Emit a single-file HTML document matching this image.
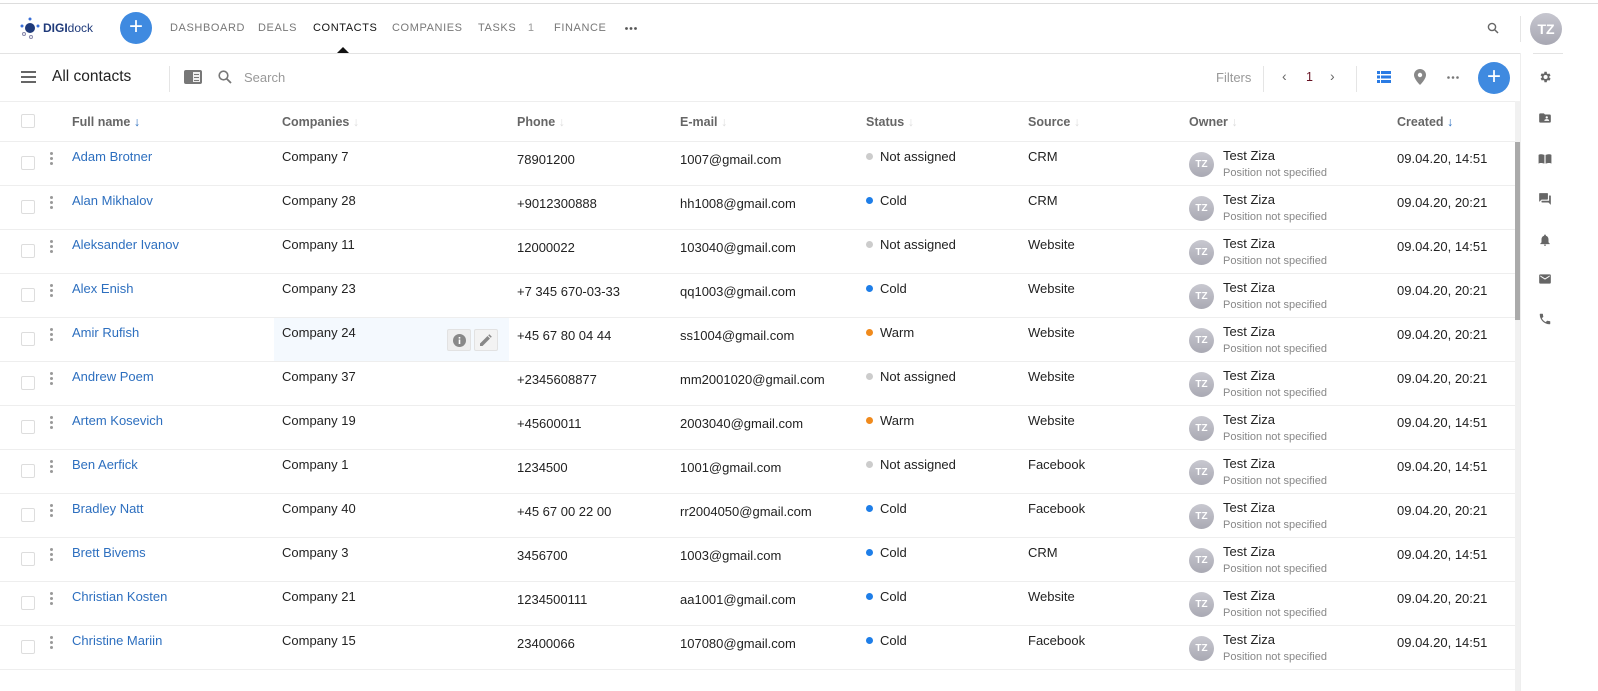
<!DOCTYPE html>
<html><head><meta charset="utf-8"><style>
*{margin:0;padding:0;box-sizing:border-box}
body{width:1598px;height:691px;overflow:hidden;background:#fff;font-family:"Liberation Sans",Arial,sans-serif;position:relative;color:#222}
.a{position:absolute;white-space:nowrap}
.nav{font-size:11px;letter-spacing:.6px;color:#777;top:22px}
.hd{font-size:12.5px;font-weight:bold;color:#666;top:115px}
.row{position:absolute;left:0;width:1515px;height:44px;border-bottom:1px solid #eee;font-size:13px}
.row .a{line-height:16px}
.cb{left:21px;top:14px;width:14px;height:14px;border:1.5px solid #ddd;border-radius:2px}
.dots{left:50px;top:10px;width:3px}
.dots i{display:block;width:3px;height:3px;border-radius:50%;background:#999;margin-bottom:2px}
.nm{left:72px;top:7px;color:#2d6fbf}
.co{left:282px;top:7px}
.ph{left:517px;top:10px}
.em{left:680px;top:10px}
.st{left:866px;top:7px}
.st b{display:inline-block;width:7px;height:7px;border-radius:50%;margin-right:7px;vertical-align:1px}
.so{left:1028px;top:7px}
.av{left:1189px;top:10px;width:25px;height:25px;border-radius:50%;background:linear-gradient(#c8c8d0,#a9a9b3);color:#fff;font-size:10px;font-weight:bold;text-align:center;line-height:25px!important}
.on{left:1223px;top:6px}
.ps{left:1223px;top:23px;font-size:11px;color:#888}
.cr{left:1397px;top:9px}
.g{background:#ccc}.bl{background:#1e7ee8}.or{background:#f08a1c}
.si{position:absolute;left:1538px;width:14px;height:14px}
</style></head><body>
<div class="a" style="left:0;top:3px;width:1598px;height:1px;background:#ddd"></div>
<svg class="a" style="left:19px;top:17px" width="22" height="22" viewBox="0 0 22 22"><circle cx="11" cy="11" r="5" fill="#1f3a7a"/><circle cx="11" cy="2" r="1.5" fill="#3a6fd8"/><circle cx="3" cy="9" r="1.5" fill="#3a6fd8"/><circle cx="19" cy="9" r="1.5" fill="#3a6fd8"/><circle cx="5" cy="17" r="1.5" fill="none" stroke="#88a" /><circle cx="12" cy="20" r="1.5" fill="none" stroke="#88a"/></svg>
<div class="a" style="left:43px;top:21px;font-size:12px;color:#1f3a7a"><b>DIGI</b>dock</div>
<div class="a" style="left:120px;top:12px;width:32px;height:32px;border-radius:50%;background:#3f8ae0;color:#fff;font-size:24px;line-height:30px;text-align:center">+</div>
<div class="a nav" style="left:170px">DASHBOARD</div>
<div class="a nav" style="left:258px">DEALS</div>
<div class="a nav" style="left:313px;color:#111">CONTACTS</div>
<div class="a nav" style="left:392px">COMPANIES</div>
<div class="a nav" style="left:478px">TASKS <span style="margin-left:8px;color:#999">1</span></div>
<div class="a nav" style="left:554px">FINANCE</div>
<svg class="a" style="left:625px;top:27px" width="12" height="3"><circle cx="1.5" cy="1.5" r="1.4" fill="#555"/><circle cx="6" cy="1.5" r="1.4" fill="#555"/><circle cx="10.5" cy="1.5" r="1.4" fill="#555"/></svg>
<div class="a" style="left:337px;top:47px;width:0;height:0;border-left:6px solid transparent;border-right:6px solid transparent;border-bottom:6px solid #111"></div>
<svg class="a" style="left:1487px;top:22px" width="12" height="12" viewBox="0 0 12 12"><circle cx="5" cy="5" r="3.6" fill="none" stroke="#666" stroke-width="1.4"/><path d="M7.6 7.6L11 11" stroke="#666" stroke-width="1.5"/></svg>
<div class="a" style="left:1520px;top:16px;width:1px;height:26px;background:#e5e5e5"></div>
<div class="a" style="left:1530px;top:13px;width:32px;height:32px;border-radius:50%;background:linear-gradient(#c6c6cf,#a8a8b3);color:#fff;font-weight:bold;font-size:14px;text-align:center;line-height:32px">TZ</div>
<div class="a" style="left:0;top:53px;width:1520px;height:1px;background:#e3e3e3"></div>
<div class="a" style="left:1533px;top:53px;width:30px;height:1px;background:#e3e3e3"></div>
<div class="a" style="left:1520px;top:53px;width:1px;height:638px;background:#eee"></div>
<svg class="a" style="left:21px;top:71px" width="15" height="12"><rect y="0" width="15" height="2" fill="#666"/><rect y="5" width="15" height="2" fill="#666"/><rect y="10" width="15" height="2" fill="#666"/></svg>
<div class="a" style="left:52px;top:68px;font-size:15.5px;color:#222">All contacts</div>
<div class="a" style="left:169px;top:66px;width:1px;height:26px;background:#e5e5e5"></div>
<svg class="a" style="left:184px;top:70px" width="18" height="14"><rect width="18" height="14" rx="2" fill="#777"/><rect x="9" y="2" width="7" height="10" fill="#eee"/><rect x="10" y="4" width="5" height="1" fill="#777"/><rect x="10" y="7" width="5" height="1" fill="#777"/><rect x="10" y="10" width="5" height="1" fill="#777"/></svg>
<svg class="a" style="left:218px;top:70px" width="14" height="14" viewBox="0 0 14 14"><circle cx="5.5" cy="5.5" r="4.3" fill="none" stroke="#777" stroke-width="1.6"/><path d="M8.7 8.7L13 13" stroke="#777" stroke-width="1.8"/></svg>
<div class="a" style="left:244px;top:70px;font-size:13px;color:#999">Search</div>
<div class="a" style="left:1216px;top:70px;font-size:13px;color:#999">Filters</div>
<div class="a" style="left:1263px;top:66px;width:1px;height:26px;background:#e5e5e5"></div>
<div class="a" style="left:1282px;top:68px;font-size:14px;color:#666">‹</div>
<div class="a" style="left:1306px;top:70px;font-size:12.5px;color:#612">1</div>
<div class="a" style="left:1330px;top:68px;font-size:14px;color:#666">›</div>
<div class="a" style="left:1356px;top:66px;width:1px;height:26px;background:#e5e5e5"></div>
<svg class="a" style="left:1377px;top:71px" width="14" height="12"><rect width="3" height="3" fill="#2a7be4"/><rect x="4" width="10" height="3" fill="#2a7be4"/><rect y="4.5" width="3" height="3" fill="#2a7be4"/><rect x="4" y="4.5" width="10" height="3" fill="#2a7be4"/><rect y="9" width="3" height="3" fill="#2a7be4"/><rect x="4" y="9" width="10" height="3" fill="#2a7be4"/></svg>
<svg class="a" style="left:1414px;top:69px" width="12" height="16" viewBox="0 0 12 16"><path d="M6 0C2.7 0 0 2.6 0 5.9 0 10.3 6 16 6 16s6-5.7 6-10.1C12 2.6 9.3 0 6 0z" fill="#888"/><circle cx="6" cy="6" r="2.2" fill="#fff"/></svg>
<svg class="a" style="left:1447px;top:76px" width="12" height="3"><circle cx="1.5" cy="1.5" r="1.3" fill="#777"/><circle cx="6" cy="1.5" r="1.3" fill="#777"/><circle cx="10.5" cy="1.5" r="1.3" fill="#777"/></svg>
<div class="a" style="left:1478px;top:62px;width:32px;height:32px;border-radius:50%;background:#3f8ae0;color:#fff;font-size:24px;line-height:30px;text-align:center">+</div>
<div class="a" style="left:0;top:101px;width:1515px;height:1px;background:#eee"></div>
<div class="a" style="left:21px;top:114px;width:14px;height:14px;border:1.5px solid #ddd;border-radius:2px"></div>
<div class="a hd" style="left:72px">Full name <span style="color:#2d6fbf;font-weight:normal">↓</span></div>
<div class="a hd" style="left:282px">Companies <span style="color:#ddd;font-weight:normal">↓</span></div>
<div class="a hd" style="left:517px">Phone <span style="color:#ddd;font-weight:normal">↓</span></div>
<div class="a hd" style="left:680px">E-mail <span style="color:#ddd;font-weight:normal">↓</span></div>
<div class="a hd" style="left:866px">Status <span style="color:#ddd;font-weight:normal">↓</span></div>
<div class="a hd" style="left:1028px">Source <span style="color:#ddd;font-weight:normal">↓</span></div>
<div class="a hd" style="left:1189px">Owner <span style="color:#ddd;font-weight:normal">↓</span></div>
<div class="a hd" style="left:1397px">Created <span style="color:#2d6fbf;font-weight:normal">↓</span></div>
<div class="a" style="left:0;top:141px;width:1515px;height:1px;background:#eee"></div>
<div class="a" style="left:1515px;top:101px;width:5px;height:590px;background:#f1f1f1"></div>
<div class="a" style="left:1515px;top:142px;width:5px;height:178px;background:#aaa"></div>
<div class="row" style="top:142px"><div class="a cb"></div><div class="a dots"><i></i><i></i><i></i></div><div class="a nm">Adam Brotner</div><div class="a co">Company 7</div><div class="a ph">78901200</div><div class="a em">1007@gmail.com</div><div class="a st"><b class="g"></b>Not assigned</div><div class="a so">CRM</div><div class="a av">TZ</div><div class="a on">Test Ziza</div><div class="a ps">Position not specified</div><div class="a cr">09.04.20, 14:51</div></div>
<div class="row" style="top:186px"><div class="a cb"></div><div class="a dots"><i></i><i></i><i></i></div><div class="a nm">Alan Mikhalov</div><div class="a co">Company 28</div><div class="a ph">+9012300888</div><div class="a em">hh1008@gmail.com</div><div class="a st"><b class="bl"></b>Cold</div><div class="a so">CRM</div><div class="a av">TZ</div><div class="a on">Test Ziza</div><div class="a ps">Position not specified</div><div class="a cr">09.04.20, 20:21</div></div>
<div class="row" style="top:230px"><div class="a cb"></div><div class="a dots"><i></i><i></i><i></i></div><div class="a nm">Aleksander Ivanov</div><div class="a co">Company 11</div><div class="a ph">12000022</div><div class="a em">103040@gmail.com</div><div class="a st"><b class="g"></b>Not assigned</div><div class="a so">Website</div><div class="a av">TZ</div><div class="a on">Test Ziza</div><div class="a ps">Position not specified</div><div class="a cr">09.04.20, 14:51</div></div>
<div class="row" style="top:274px"><div class="a cb"></div><div class="a dots"><i></i><i></i><i></i></div><div class="a nm">Alex Enish</div><div class="a co">Company 23</div><div class="a ph">+7 345 670-03-33</div><div class="a em">qq1003@gmail.com</div><div class="a st"><b class="bl"></b>Cold</div><div class="a so">Website</div><div class="a av">TZ</div><div class="a on">Test Ziza</div><div class="a ps">Position not specified</div><div class="a cr">09.04.20, 20:21</div></div>
<div class="row" style="top:318px"><div class="a" style="left:274px;top:0;width:235px;height:43px;background:#f4f9fe"></div><div class="a" style="left:447px;top:11px;width:24px;height:22px;background:#eee;border:1px solid #e2e2e2;border-radius:2px"><svg style="margin:4px 5px" width="13" height="13" viewBox="0 0 13 13"><circle cx="6.5" cy="6.5" r="6.5" fill="#888"/><rect x="5.7" y="5.5" width="1.6" height="4.5" fill="#fff"/><rect x="5.7" y="3" width="1.6" height="1.6" fill="#fff"/></svg></div><div class="a" style="left:474px;top:11px;width:24px;height:22px;background:#f3f3f3;border:1px solid #e2e2e2;border-radius:2px"><svg style="margin:4px 5px" width="12" height="12" viewBox="0 0 12 12"><path d="M0 9.5V12h2.5L10 4.5 7.5 2z M11.8 2.7L9.3.2 8.2 1.3l2.5 2.5z" fill="#888"/></svg></div><div class="a cb"></div><div class="a dots"><i></i><i></i><i></i></div><div class="a nm">Amir Rufish</div><div class="a co">Company 24</div><div class="a ph">+45 67 80 04 44</div><div class="a em">ss1004@gmail.com</div><div class="a st"><b class="or"></b>Warm</div><div class="a so">Website</div><div class="a av">TZ</div><div class="a on">Test Ziza</div><div class="a ps">Position not specified</div><div class="a cr">09.04.20, 20:21</div></div>
<div class="row" style="top:362px"><div class="a cb"></div><div class="a dots"><i></i><i></i><i></i></div><div class="a nm">Andrew Poem</div><div class="a co">Company 37</div><div class="a ph">+2345608877</div><div class="a em">mm2001020@gmail.com</div><div class="a st"><b class="g"></b>Not assigned</div><div class="a so">Website</div><div class="a av">TZ</div><div class="a on">Test Ziza</div><div class="a ps">Position not specified</div><div class="a cr">09.04.20, 20:21</div></div>
<div class="row" style="top:406px"><div class="a cb"></div><div class="a dots"><i></i><i></i><i></i></div><div class="a nm">Artem Kosevich</div><div class="a co">Company 19</div><div class="a ph">+45600011</div><div class="a em">2003040@gmail.com</div><div class="a st"><b class="or"></b>Warm</div><div class="a so">Website</div><div class="a av">TZ</div><div class="a on">Test Ziza</div><div class="a ps">Position not specified</div><div class="a cr">09.04.20, 14:51</div></div>
<div class="row" style="top:450px"><div class="a cb"></div><div class="a dots"><i></i><i></i><i></i></div><div class="a nm">Ben Aerfick</div><div class="a co">Company 1</div><div class="a ph">1234500</div><div class="a em">1001@gmail.com</div><div class="a st"><b class="g"></b>Not assigned</div><div class="a so">Facebook</div><div class="a av">TZ</div><div class="a on">Test Ziza</div><div class="a ps">Position not specified</div><div class="a cr">09.04.20, 14:51</div></div>
<div class="row" style="top:494px"><div class="a cb"></div><div class="a dots"><i></i><i></i><i></i></div><div class="a nm">Bradley Natt</div><div class="a co">Company 40</div><div class="a ph">+45 67 00 22 00</div><div class="a em">rr2004050@gmail.com</div><div class="a st"><b class="bl"></b>Cold</div><div class="a so">Facebook</div><div class="a av">TZ</div><div class="a on">Test Ziza</div><div class="a ps">Position not specified</div><div class="a cr">09.04.20, 20:21</div></div>
<div class="row" style="top:538px"><div class="a cb"></div><div class="a dots"><i></i><i></i><i></i></div><div class="a nm">Brett Bivems</div><div class="a co">Company 3</div><div class="a ph">3456700</div><div class="a em">1003@gmail.com</div><div class="a st"><b class="bl"></b>Cold</div><div class="a so">CRM</div><div class="a av">TZ</div><div class="a on">Test Ziza</div><div class="a ps">Position not specified</div><div class="a cr">09.04.20, 14:51</div></div>
<div class="row" style="top:582px"><div class="a cb"></div><div class="a dots"><i></i><i></i><i></i></div><div class="a nm">Christian Kosten</div><div class="a co">Company 21</div><div class="a ph">1234500111</div><div class="a em">aa1001@gmail.com</div><div class="a st"><b class="bl"></b>Cold</div><div class="a so">Website</div><div class="a av">TZ</div><div class="a on">Test Ziza</div><div class="a ps">Position not specified</div><div class="a cr">09.04.20, 20:21</div></div>
<div class="row" style="top:626px"><div class="a cb"></div><div class="a dots"><i></i><i></i><i></i></div><div class="a nm">Christine Mariin</div><div class="a co">Company 15</div><div class="a ph">23400066</div><div class="a em">107080@gmail.com</div><div class="a st"><b class="bl"></b>Cold</div><div class="a so">Facebook</div><div class="a av">TZ</div><div class="a on">Test Ziza</div><div class="a ps">Position not specified</div><div class="a cr">09.04.20, 14:51</div></div>
<svg class="si" style="top:70px" viewBox="0 0 24 24"><path fill="#666" d="M19.4 13a7.5 7.5 0 000-2l2.1-1.6-2-3.5-2.5 1a7 7 0 00-1.700-1L15 3h-4l-.4 2.7a7 7 0 00-1.7 1l-2.5-1-2 3.5L6.6 11a7.5 7.5 0 000 2l-2.1 1.6 2 3.5 2.5-1a7 7 0 001.7 1L11 21h4l.4-2.7a7 7 0 001.7-1l2.5 1 2-3.5zM13 15.5a3.5 3.5 0 110-7 3.5 3.5 0 010 7z"/></svg>
<svg class="si" style="top:111px" viewBox="0 0 24 24"><path fill="#666" d="M20 6h-8l-2-2H4a2 2 0 00-2 2v12a2 2 0 002 2h16a2 2 0 002-2V8a2 2 0 00-2-2zm-5 3a2 2 0 110 4 2 2 0 010-4zm4 8h-8v-1c0-1.3 2.7-2 4-2s4 .7 4 2z"/></svg>
<svg class="si" style="top:152px" viewBox="0 0 24 24"><path fill="#666" d="M1 5c2-1.3 5-1.5 10 0v15c-5-1.5-8-1.3-10 0zM13 5c5-1.5 8-1.3 10 0v15c-2-1.3-5-1.5-10 0z"/></svg>
<svg class="si" style="top:192px" viewBox="0 0 24 24"><path fill="#666" d="M21 6h-2v9H6v2a1 1 0 001 1h11l4 4V7a1 1 0 00-1-1zm-4 6V3a1 1 0 00-1-1H3a1 1 0 00-1 1v14l4-4h10a1 1 0 001-1z"/></svg>
<svg class="si" style="top:233px" viewBox="0 0 24 24"><path fill="#666" d="M12 22a2 2 0 002-2h-4a2 2 0 002 2zm6-6v-5c0-3-1.6-5.6-4.5-6.3V4a1.5 1.5 0 00-3 0v.7C7.6 5.4 6 8 6 11v5l-2 2v1h16v-1z"/></svg>
<svg class="si" style="top:272px" viewBox="0 0 24 24"><path fill="#666" d="M20 4H4a2 2 0 00-2 2v12a2 2 0 002 2h16a2 2 0 002-2V6a2 2 0 00-2-2zm0 4l-8 5-8-5V6l8 5 8-5z"/></svg>
<svg class="si" style="top:312px" viewBox="0 0 24 24"><path fill="#666" d="M6.6 10.8a15 15 0 006.6 6.6l2.2-2.2a1 1 0 011-.2 11.4 11.4 0 003.6.6 1 1 0 011 1V20a1 1 0 01-1 1A17 17 0 013 4a1 1 0 011-1h3.5a1 1 0 011 1c0 1.3.2 2.5.6 3.6a1 1 0 01-.3 1z"/></svg>
</body></html>
